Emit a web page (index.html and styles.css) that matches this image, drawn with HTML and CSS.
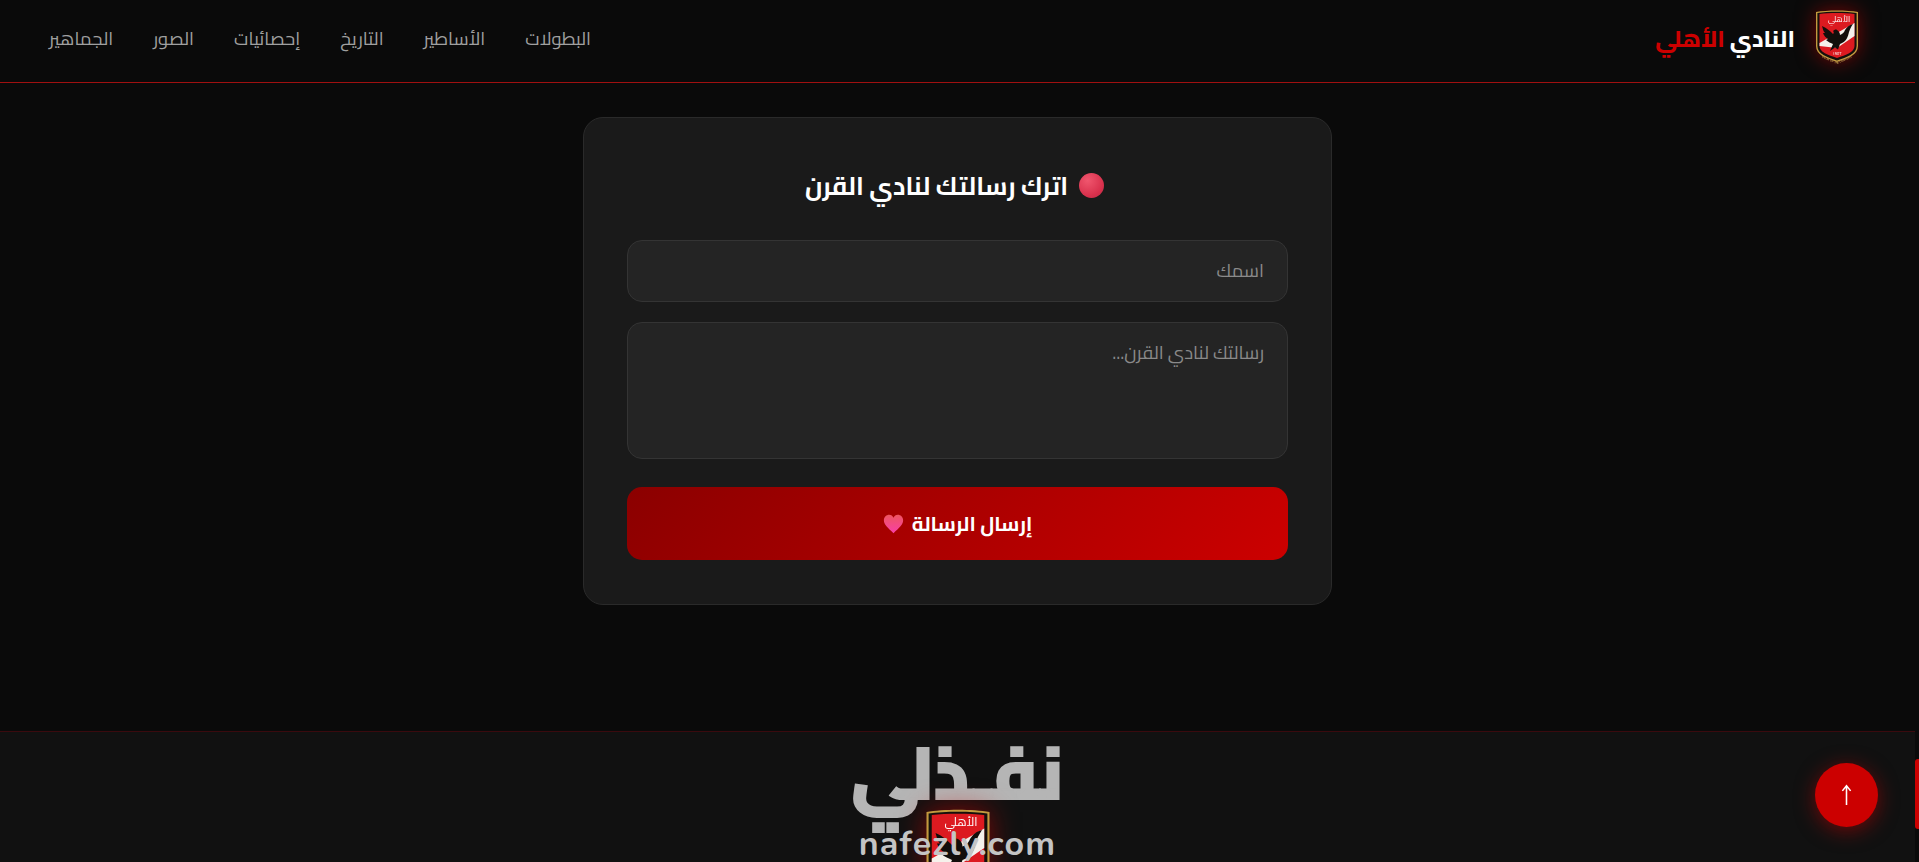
FILE: index.html
```html
<!DOCTYPE html>
<html lang="ar" dir="rtl">
<head>
<meta charset="utf-8">
<title>النادي الأهلي</title>
<link rel="stylesheet" href="styles.css">
</head>
<body>
<svg class="defs" width="0" height="0" aria-hidden="true">
  <defs>
    <symbol id="crest" viewBox="0 0 44 56">
      <path id="crest-edge" d="M1 2C12 0 32 0 43 2V36C43 45 33 48 22 52C11 48 1 45 1 36Z" fill="#c39a3e"/>
      <path d="M2.400 3C13 1.400 31 1.400 41.600 3V36C41.600 44 32 47 22 50.500C12 47 2.400 44 2.400 36Z" fill="#15100c"/>
      <path d="M4.500 4C14 2.800 30 2.800 39.500 4V36C39.500 42 31 45 22 48C13 45 4.500 42 4.500 36Z" fill="#dc1a20"/>
      <path d="M4.500 33L39.500 13V26L22 38L4.500 36Z" fill="#f5f1eb"/>
      <path d="M38 14C34 15 32 17 30 20C29 23 27 24 25 25C25 23 24 21 22 20C21 19 19 20 18 21C19 22 19 23 18 24C15 21 12 18 7 16C8 19 8 21 10 23L8 23C9 26 11 28 13 29L11 30C13 32 16 33 18 34L15 41L20 37.500L23 39.500L25 34C31 32 33 27 34 22C35 19 36 17 38 14Z" fill="#120e0b"/>
      <text x="24" y="11.500" class="crest-text" text-anchor="middle">الأهلي</text>
      <text x="22" y="44.500" class="crest-text crest-text-small" text-anchor="middle">1907</text>
      <path id="crest-curve" d="M2 44C10 50 16 51 22 54C28 51 34 50 42 44" fill="none"/>
      <text class="crest-motto"><textPath href="#crest-curve" startOffset="50%" text-anchor="middle">CLUB OF THE CENTURY</textPath></text>
    </symbol>
  </defs>
</svg>
<div class="page">
  <div class="content">
    <header class="site-header">
      <a class="brand" href="#">
        <span class="brand-crest"><svg class="crest-svg"><use href="#crest"/></svg></span>
        <span class="brand-name">النادي <span class="accent">الأهلي</span></span>
      </a>
      <nav class="nav">
        <a href="#">البطولات</a>
        <a href="#">الأساطير</a>
        <a href="#">التاريخ</a>
        <a href="#">إحصائيات</a>
        <a href="#">الصور</a>
        <a href="#">الجماهير</a>
      </nav>
    </header>
    <main class="main">
      <form class="card">
        <h2 class="card-title"><span class="ball"></span>اترك رسالتك لنادي القرن</h2>
        <input class="field" type="text" placeholder="اسمك">
        <textarea class="field area" placeholder="رسالتك لنادي القرن..."></textarea>
        <button class="send" type="button">إرسال الرسالة
          <svg class="heart" viewBox="0 0 24 24" preserveAspectRatio="none"><defs><linearGradient id="hg" x1="0" y1="0" x2="0" y2="1"><stop offset="0" stop-color="#ee5560"/><stop offset="1" stop-color="#f83fa8"/></linearGradient></defs><path d="M12 23C6 17 1 13 1 7.500C1 3.500 4 1 7 1C9.500 1 11 2.500 12 4.500C13 2.500 14.500 1 17 1C20 1 23 3.500 23 7.500C23 13 18 17 12 23Z" fill="url(#hg)"/></svg>
        </button>
      </form>
    </main>
    <footer class="site-footer">
      <div class="footer-logo">
        <div class="logo-ar">نفـذلي</div>
        <div class="logo-art">
          <span class="footer-crest"><svg class="crest-svg"><use href="#crest"/></svg></span>
          <span class="logo-en">nafezly.com</span>
        </div>
      </div>
    </footer>
  </div>
  <div class="scroll-track"></div>
</div>
<a class="to-top" href="#"><svg class="to-top-icon" viewBox="0 0 14 24"><path d="M7 23V2M2.500 7.500L7 2L11.500 7.500" fill="none" stroke="#fff" stroke-width="1.700"/></svg></a>
<span class="scroll-thumb"></span>
</body>
</html>
```

FILE: styles.css
```css
* { box-sizing: border-box; }
html, body { margin: 0; height: 100%; overflow: hidden; }
body {
  background: #0a0a0a;
  color: #fff;
  font-family: "Cairo", "Noto Sans Arabic", "DejaVu Sans", sans-serif;
}
.defs { position: absolute; }
.page { display: flex; height: 862px; direction: ltr; }
.content { flex: 1; direction: rtl; display: flex; flex-direction: column; min-width: 0; }
.scroll-track { width: 4px; background: #0a0a0a; }
.site-header {
  height: 83px;
  flex: none;
  display: flex;
  align-items: center;
  justify-content: space-between;
  padding: 0 56px 6px 49px;
  background: #0a0a0a;
  border-bottom: 1px solid #a01010;
}
.brand { display: flex; align-items: center; gap: 20px; text-decoration: none; color: #fff; }
.brand-crest { width: 44px; height: 56px; filter: drop-shadow(0 0 10px rgba(204,0,0,.55)); }
.crest-svg { width: 100%; height: 100%; display: block; }
.brand-name { font-size: 23px; font-weight: 800; }
.accent { color: #cc0000; }
.nav { display: flex; gap: 40px; }
.nav a { color: #a0a0a0; font-size: 18.300px; font-weight: 400; text-decoration: none; }
.main { flex: 1; display: flex; justify-content: center; align-items: flex-start; padding-top: 34px; }
.card {
  width: 749px;
  height: 488px;
  padding: 43px 43px;
  background: #1a1a1a;
  border: 1px solid #2a2a2a;
  border-radius: 20px;
  display: flex;
  flex-direction: column;
}
.card-title {
  margin: 0 0 31px;
  font-size: 25px;
  font-weight: 700;
  height: 48px;
  flex: none;
  display: flex;
  align-items: center;
  justify-content: center;
  gap: 11px;
}
.ball {
  width: 25px; height: 25px; border-radius: 50%;
  margin-inline-start: 6px;
  background: radial-gradient(circle at 35% 30%, #f0566e, #d8304c 65%, #b82a44);
}
.field {
  display: block;
  flex: none;
  width: 100%;
  height: 62px;
  padding: 0 23px 2px;
  background: #242424;
  border: 1px solid #343434;
  border-radius: 15px;
  color: #fff;
  font: inherit;
  font-size: 18.400px;
  margin-bottom: 20px;
  resize: none;
  outline: none;
}
.field::placeholder { color: #8a8a8a; opacity: 1; }
.area { height: 137px; padding: 12px 23px; margin-bottom: 28px; }
.send {
  flex: none;
  height: 73px;
  border: 0;
  border-radius: 15px;
  background: linear-gradient(135deg, #8b0000, #cc0000);
  color: #fff;
  font: inherit;
  font-size: 20.200px;
  font-weight: 700;
  display: flex;
  align-items: center;
  justify-content: center;
  gap: 8px;
}
.heart { width: 21px; height: 20px; }
.site-footer {
  height: 131px;
  flex: none;
  background: #111;
  border-top: 1px solid #3a0a0e;
  display: flex;
  justify-content: center;
}
.footer-logo { width: 300px; display: flex; flex-direction: column; align-items: center; }
.logo-ar {
  color: #b5b5b5;
  font-size: 72px;
  font-weight: 800;
  line-height: 82px;
  height: 82px;
  margin-bottom: -5px;
  -webkit-text-stroke: 2px #b5b5b5;
  white-space: nowrap;
}
.logo-art { position: relative; width: 220px; display: flex; justify-content: center; }
.footer-crest { width: 66px; height: 84px; flex: none; filter: drop-shadow(0 0 14px rgba(204,0,0,.6)); }
.logo-en {
  position: absolute; left: 0; right: 0; top: 18px; text-align: center;
  direction: ltr;
  color: #c4c4c4; font-family: "Nunito", "Quicksand", "Lato", sans-serif; font-size: 34px; line-height: 34px; font-weight: 700; letter-spacing: 1.200px;
}
.crest-text { font-size: 8px; fill: #fff; }
.crest-text-small { font-size: 4px; }
.crest-motto { font-family: "Liberation Sans", sans-serif; font-size: 2.800px; font-weight: 700; fill: #b8944a; }
.to-top {
  position: fixed; left: 1815px; top: 763px;
  width: 63px; height: 64px; border-radius: 50%;
  background: #cc0000;
  display: flex; align-items: center; justify-content: center;
  text-decoration: none;
  box-shadow: 0 4px 20px rgba(204,0,0,.5);
}
.to-top-icon { width: 13px; height: 22px; }
.scroll-thumb {
  position: fixed; left: 1915px; top: 759px; width: 4px; height: 70px;
  background: #c00; border-radius: 3px 0 0 3px;
}
```
